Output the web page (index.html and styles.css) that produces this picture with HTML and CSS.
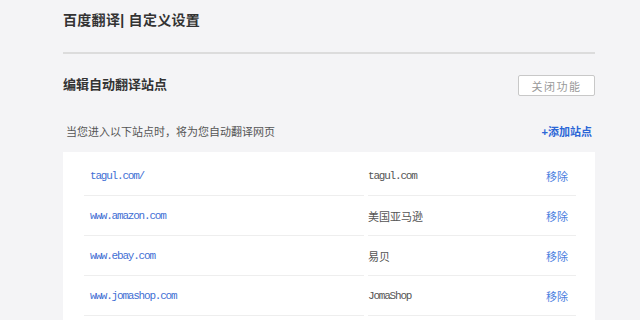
FILE: index.html
```html
<!DOCTYPE html>
<html lang="zh-CN">
<head>
  <meta charset="UTF-8">
  <title>百度翻译 自定义设置</title>
  <link rel="stylesheet" href="styles.css">
</head>
<body>
  <div class="page">
    <h1 class="title">百度翻译| 自定义设置</h1>

    <div class="section-head">
      <h2>编辑自动翻译站点</h2>
      <button class="btn-off">关闭功能</button>
    </div>

    <div class="desc-row">
      <span class="desc">当您进入以下站点时，将为您自动翻译网页</span>
      <a class="add-link" href="#">+添加站点</a>
    </div>

    <div class="site-list">
      <div class="site-row">
        <div class="cell url mono">tagul.com/</div>
        <div class="cell name"><span class="mono">tagul.com</span><a href="#" class="remove">移除</a></div>
      </div>
      <div class="site-row">
        <div class="cell url mono">www.amazon.com</div>
        <div class="cell name"><span>美国亚马逊</span><a href="#" class="remove">移除</a></div>
      </div>
      <div class="site-row">
        <div class="cell url mono">www.ebay.com</div>
        <div class="cell name"><span>易贝</span><a href="#" class="remove">移除</a></div>
      </div>
      <div class="site-row">
        <div class="cell url mono">www.jomashop.com</div>
        <div class="cell name"><span class="mono">JomaShop</span><a href="#" class="remove">移除</a></div>
      </div>
    </div>
  </div>
</body>
</html>
```

FILE: styles.css
```css
body {
  margin: 0;
  background-color: #f4f4f6;
  font-family: "Liberation Sans", "Noto Sans CJK SC", sans-serif;
  color: #333;
  overflow: hidden;
}

.page {
  width: 532px;
  margin-left: 63px;
}

.title {
  margin: 0;
  padding-top: 10px;
  height: 42px;
  font-size: 14px;
  font-weight: bold;
  line-height: 20px;
  letter-spacing: 0.3px;
  border-bottom: 2px solid #dcdcdc;
}

.section-head {
  display: flex;
  justify-content: space-between;
  align-items: center;
  margin-top: 16px;
  height: 26px;
}

.section-head h2 {
  margin: 0;
  font-size: 13px;
  font-weight: bold;
  color: #333;
}

.btn-off {
  width: 77px;
  height: 21px;
  margin-top: 5px;
  background: #fff;
  border: 1px solid #c8c8c8;
  border-radius: 2px;
  font-family: inherit;
  font-size: 11px;
  letter-spacing: 1.5px;
  color: #999;
  padding: 0;
}

.desc-row {
  display: flex;
  justify-content: space-between;
  align-items: center;
  margin-top: 22px;
  height: 26px;
  padding: 0 3px;
}

.desc {
  font-size: 11px;
  color: #555;
}

.add-link {
  font-size: 11px;
  font-weight: bold;
  color: #2b66d6;
  text-decoration: none;
}

.site-list {
  margin-top: 8px;
  background: #fff;
  padding-top: 4px;
  height: 164px;
  overflow: hidden;
}

.site-row {
  display: grid;
  grid-template-columns: 280px 1fr;
  column-gap: 4px;
  padding: 0 19px 0 21px;
}

.cell {
  height: 39px;
  border-bottom: 1px solid #eeeeee;
  display: flex;
  align-items: center;
  font-size: 11px;
}

.url {
  padding-left: 6px;
  color: #3f6fd4;
}

.mono {
  font-family: "Liberation Mono", "Noto Sans CJK SC", monospace;
  letter-spacing: -1.2px;
}

.name {
  justify-content: space-between;
  padding-right: 8px;
  color: #555;
}

.remove {
  color: #4a7ee0;
  text-decoration: none;
}
```
